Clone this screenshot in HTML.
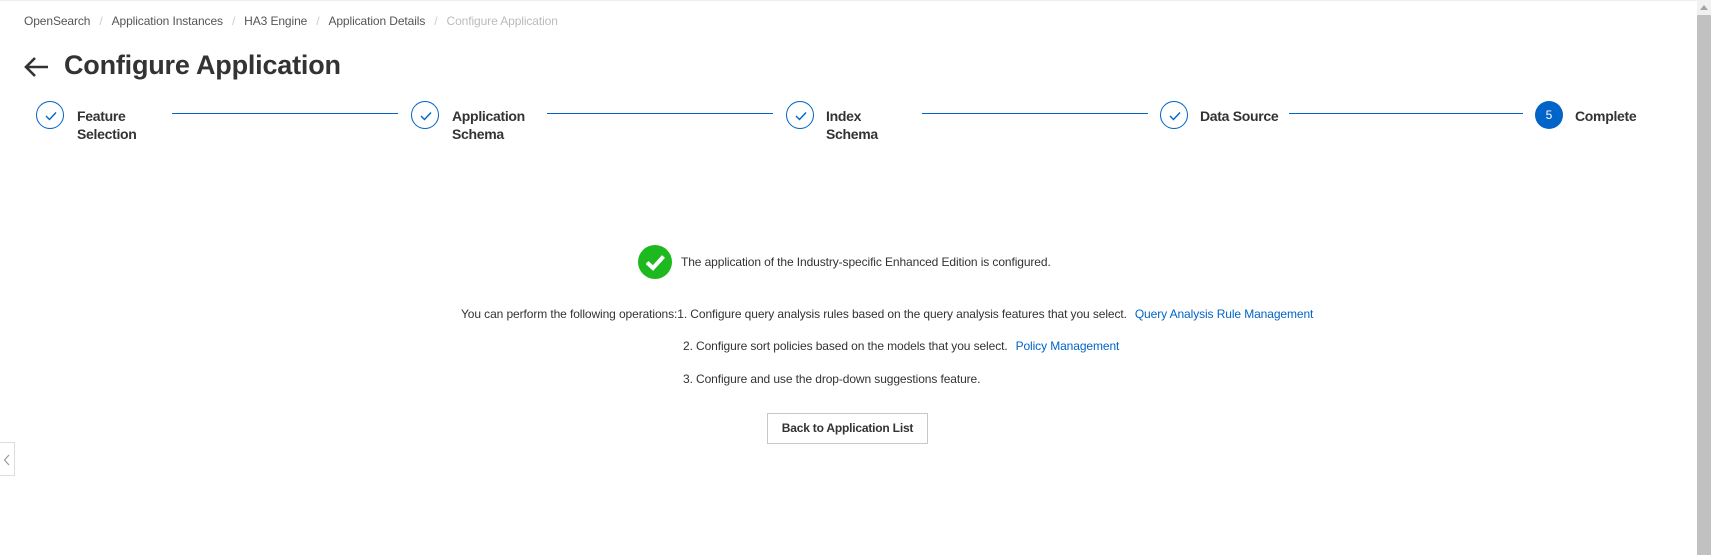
<!DOCTYPE html>
<html><head><meta charset="utf-8"><style>
*{margin:0;padding:0;box-sizing:border-box}
body{width:1711px;height:555px;background:#fff;font-family:"Liberation Sans",sans-serif;color:#333;position:relative;overflow:hidden}
.a{position:absolute;white-space:nowrap}
.bc{top:14px;left:24px;font-size:12px;color:#555;letter-spacing:-0.1px}
.bc span.s{color:#ccc;margin:0 9px}
.bc .cur{color:#bbb}
.title{top:50px;left:64px;font-size:27px;font-weight:bold;color:#333;letter-spacing:-0.2px}
.circ{width:28px;height:28px;border:1px solid #0064c8;border-radius:50%;top:101px}
.circ svg{position:absolute;left:7px;top:8px}
.lbl{top:107px;font-size:14px;font-weight:bold;color:#333;line-height:18px;letter-spacing:-0.3px}
.ln{top:113px;height:1px;background:#0064c8}
.t{font-size:12px;color:#333;letter-spacing:-0.1px}
.lk{color:#0064c8;margin-left:8px}
</style></head><body>
<div class="a" style="top:0;left:0;width:1697px;height:1px;background:#eee"></div>
<div class="a bc">OpenSearch<span class="s">/</span>Application Instances<span class="s">/</span>HA3 Engine<span class="s">/</span>Application Details<span class="s">/</span><span class="cur">Configure Application</span></div>
<svg class="a" style="left:24px;top:56px" width="26" height="22" viewBox="0 0 26 22"><path d="M2 11H24M11 2L2 11L11 20" fill="none" stroke="#333" stroke-width="2.6"/></svg>
<div class="a title">Configure Application</div>

<div class="a circ" style="left:36px"><svg width="14" height="12" viewBox="0 0 14 12"><path d="M2 6L5.5 9.5L12 2.5" fill="none" stroke="#0064c8" stroke-width="1.4"/></svg></div>
<div class="a lbl" style="left:77px">Feature<br>Selection</div>
<div class="a ln" style="left:172px;width:226px"></div>

<div class="a circ" style="left:411px"><svg width="14" height="12" viewBox="0 0 14 12"><path d="M2 6L5.5 9.5L12 2.5" fill="none" stroke="#0064c8" stroke-width="1.4"/></svg></div>
<div class="a lbl" style="left:452px">Application<br>Schema</div>
<div class="a ln" style="left:547px;width:226px"></div>

<div class="a circ" style="left:786px"><svg width="14" height="12" viewBox="0 0 14 12"><path d="M2 6L5.5 9.5L12 2.5" fill="none" stroke="#0064c8" stroke-width="1.4"/></svg></div>
<div class="a lbl" style="left:826px">Index<br>Schema</div>
<div class="a ln" style="left:922px;width:226px"></div>

<div class="a circ" style="left:1160px"><svg width="14" height="12" viewBox="0 0 14 12"><path d="M2 6L5.5 9.5L12 2.5" fill="none" stroke="#0064c8" stroke-width="1.4"/></svg></div>
<div class="a lbl" style="left:1200px">Data Source</div>
<div class="a ln" style="left:1289px;width:234px"></div>

<div class="a" style="left:1535px;top:101px;width:28px;height:28px;border-radius:50%;background:#0064c8;color:#fff;font-size:12px;text-align:center;line-height:28px">5</div>
<div class="a lbl" style="left:1575px">Complete</div>

<svg class="a" style="left:638px;top:245px" width="34" height="34" viewBox="0 0 34 34"><circle cx="17" cy="17" r="17" fill="#1eb91e"/><path d="M9 17.5L15 23L25.5 11.5" fill="none" stroke="#fff" stroke-width="4"/></svg>
<div class="a t" style="left:681px;top:255px">The application of the Industry-specific Enhanced Edition is configured.</div>
<div class="a t" style="left:461px;top:307px">You can perform the following operations:1. Configure query analysis rules based on the query analysis features that you select.<span class="lk">Query Analysis Rule Management</span></div>
<div class="a t" style="left:683px;top:339px">2. Configure sort policies based on the models that you select.<span class="lk">Policy Management</span></div>
<div class="a t" style="left:683px;top:372px">3. Configure and use the drop-down suggestions feature.</div>
<div class="a" style="left:767px;top:413px;width:161px;height:31px;border:1px solid #c8c8c8;font-size:12px;font-weight:bold;text-align:center;line-height:29px;color:#333;letter-spacing:-0.2px">Back to Application List</div>

<div class="a" style="left:0;top:442px;width:15px;height:34px;border:1px solid #ddd;border-left:none;background:#fff"><svg style="position:absolute;left:3px;top:11px" width="8" height="12" viewBox="0 0 8 12"><path d="M6 1L1.5 6L6 11" fill="none" stroke="#999" stroke-width="1.2"/></svg></div>

<div class="a" style="left:1697px;top:0;width:14px;height:555px;background:#f1f1f1"></div>
<div class="a" style="left:1697px;top:15px;width:14px;height:540px;background:#c1c1c1"></div>
<svg class="a" style="left:1700px;top:4px" width="8" height="6" viewBox="0 0 8 6"><path d="M0 6L4 1L8 6Z" fill="#a3a3a3"/></svg>
</body></html>
